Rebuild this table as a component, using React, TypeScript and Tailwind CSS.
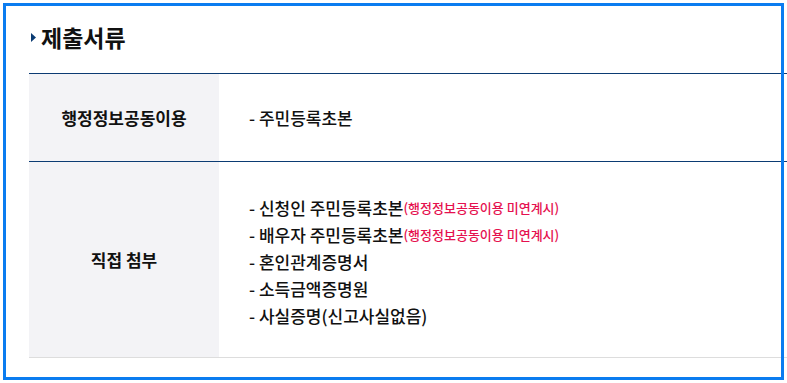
import React from "react";

const font = { fontFamily: '"Noto Sans CJK KR", "Noto Sans", sans-serif' };

const directItems: { text: string; note?: string }[] = [
  { text: "- 신청인 주민등록초본", note: "(행정정보공동이용 미연계시)" },
  { text: "- 배우자 주민등록초본", note: "(행정정보공동이용 미연계시)" },
  { text: "- 혼인관계증명서" },
  { text: "- 소득금액증명원" },
  { text: "- 사실증명(신고사실없음)" },
];

export default function App() {
  return (
    <div className="relative w-[787px] h-[383px] overflow-hidden bg-white text-[#111]" style={font}>
      <div className="pl-[29px] pt-[22px]">
        <h2 className="flex items-center h-[30px] gap-[5px]">
          <svg width="5" height="9" viewBox="0 0 5 9" className="ml-[2px]">
            <polygon points="0,0 5,4.5 0,9" fill="#0b3b73" />
          </svg>
          <span className="text-[23px] font-bold leading-none">제출서류</span>
        </h2>

        <div className="mt-[21px] w-[800px] border-t border-[#0b3b73]">
          <div className="grid grid-cols-[190px_1fr] h-[87px]">
            <div className="bg-[#f3f3f6] flex items-center justify-center text-[17px] font-bold">
              행정정보공동이용
            </div>
            <div className="flex items-center pl-[30px] text-[17px] font-medium">- 주민등록초본</div>
          </div>
          <div className="grid grid-cols-[190px_1fr] h-[197px] border-t border-[#0b3b73] border-b border-b-[#dddddd]">
            <div className="bg-[#f3f3f6] flex items-center justify-center text-[17px] font-bold">
              직접 첨부
            </div>
            <div className="flex flex-col justify-center pl-[30px] pt-[4px]">
              {directItems.map((item) => (
                <div key={item.text} className="h-[27px] flex items-center text-[17px] font-medium">
                  <span>{item.text}</span>
                  {item.note && <span className="text-[13px] text-[#e5114f]">{item.note}</span>}
                </div>
              ))}
            </div>
          </div>
        </div>
      </div>

      <div className="absolute left-[3px] top-[3px] w-[781px] h-[377px] border-[3px] border-[#0a7cf0] pointer-events-none" />
    </div>
  );
}
